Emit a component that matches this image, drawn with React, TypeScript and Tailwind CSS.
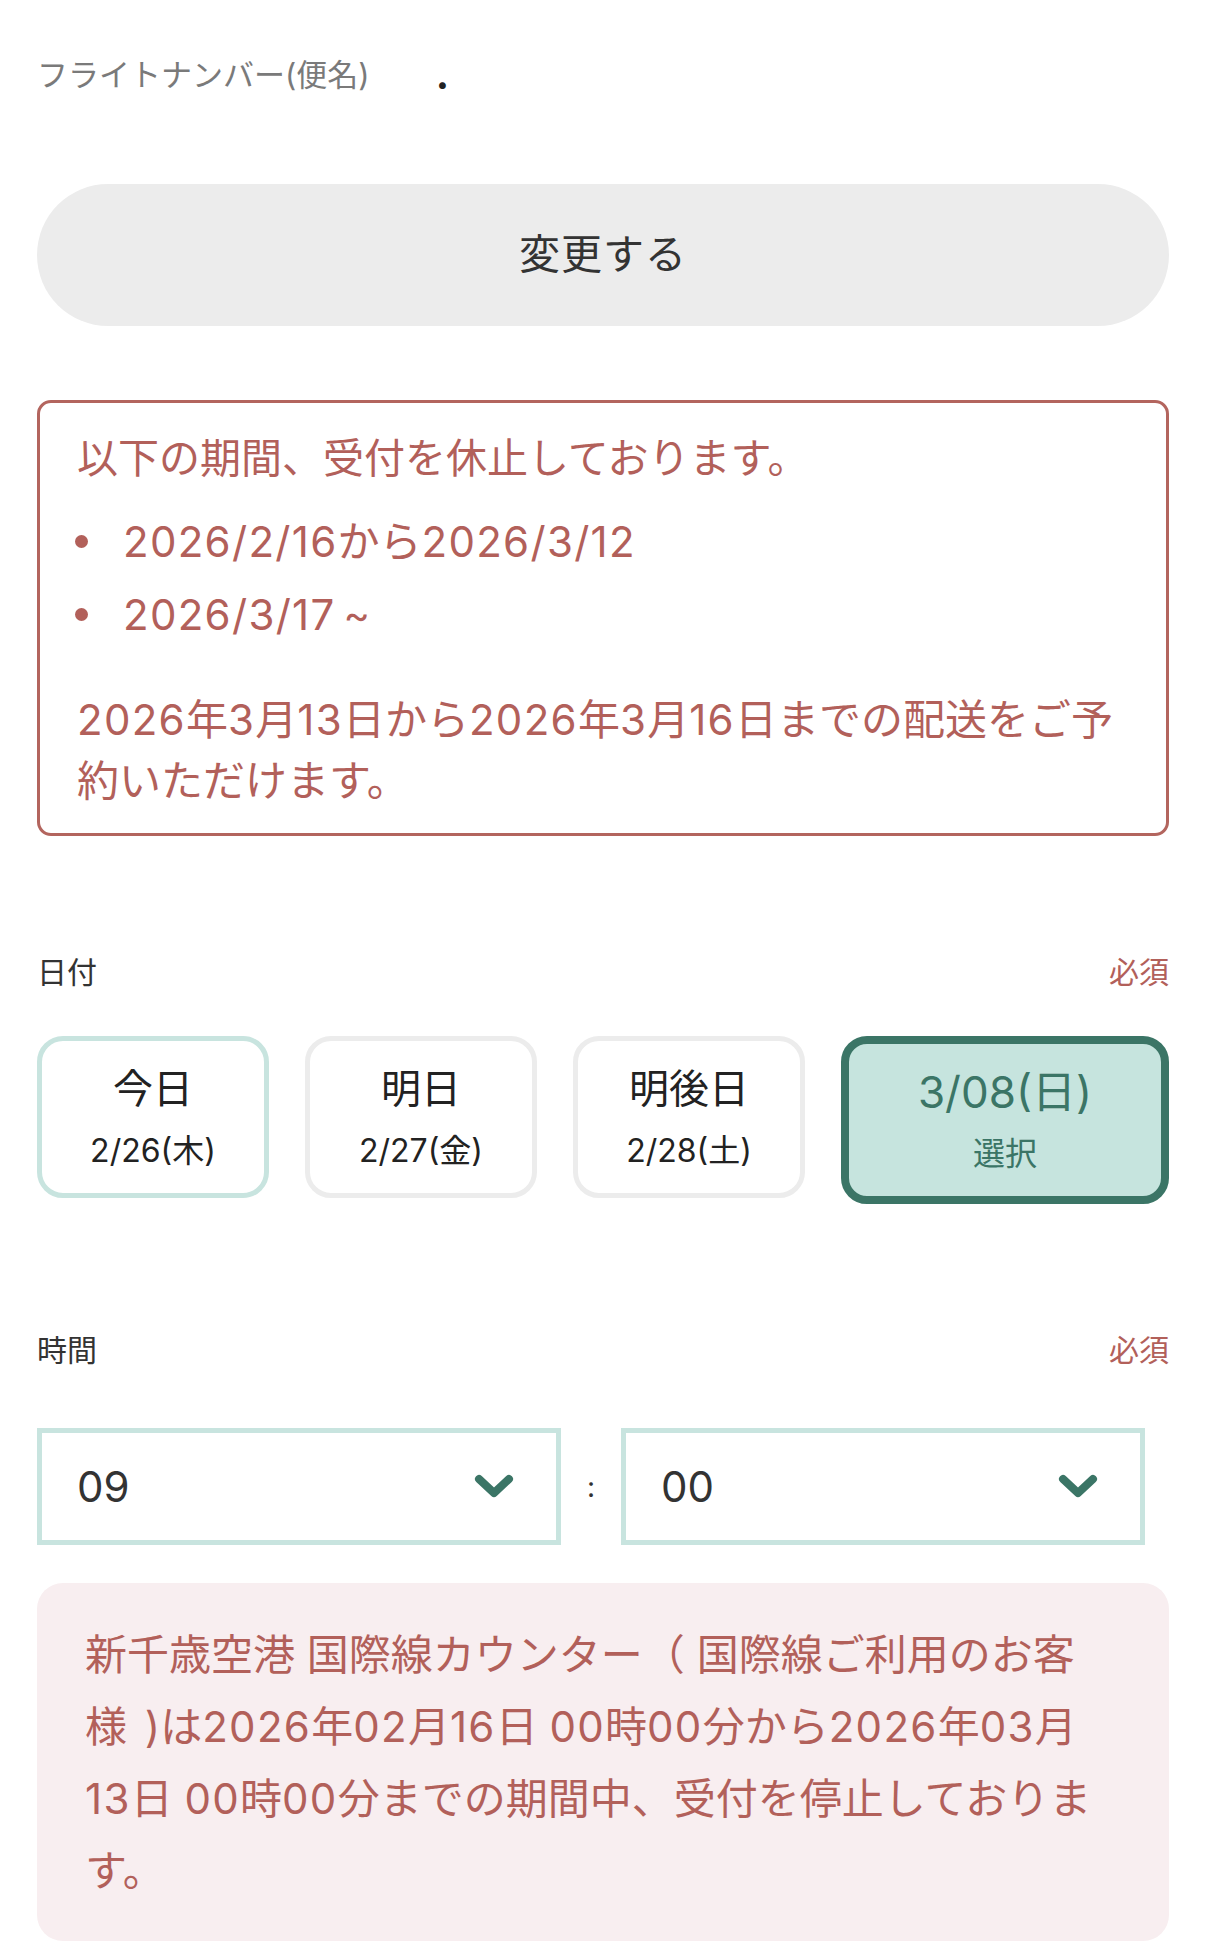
import React from 'react';

const font = { fontFamily: "Inter, 'Noto Sans CJK JP', sans-serif" };

// digits in the notices run a little wider than Inter's
const Wide: React.FC<{ text: string }> = ({ text }) => (
  <>
    {text.split(/([\d/]+)/).map((part, i) =>
      /^[\d/]+$/.test(part) ? (
        <span key={i} className="tracking-[1.3px]">
          {part}
        </span>
      ) : (
        part
      )
    )}
  </>
);

const Chevron: React.FC = () => (
  <svg width="40" height="26" viewBox="0 0 40 26" fill="none">
    <path d="M5 5 L20 19 L35 5" stroke="#3b7566" strokeWidth="8" strokeLinecap="round" strokeLinejoin="round" />
  </svg>
);

const TimeSelect: React.FC<{ value: string }> = ({ value }) => (
  <div className="w-[524px] h-[117px] border-[5px] border-[#c8e4df] flex items-center justify-between pl-[35px] pr-[42px]">
    <span className="text-[42px] leading-none text-[#333]">{value}</span>
    <Chevron />
  </div>
);

export default function App() {
  const days = [
    { top: '今日', sub: '2/26(木)', border: 'border-[#c8e4df]' },
    { top: '明日', sub: '2/27(金)', border: 'border-[#ececec]' },
    { top: '明後日', sub: '2/28(土)', border: 'border-[#ececec]' },
  ];

  return (
    <div className="w-[1206px] min-h-[1952px] bg-white px-[37px]" style={font}>
      {/* Flight number row */}
      <div className="pt-[55px] flex items-end h-[95px]">
        <span className="text-[31px] leading-[40px] text-[#7a7a7a]">フライトナンバー(便名)</span>
        <span className="ml-[66px] text-[40px] leading-[40px] text-[#222] font-bold">.</span>
      </div>

      {/* Change button */}
      <button className="mt-[89px] w-full h-[142px] rounded-full bg-[#ececec] text-[41px] text-[#333] tracking-[1px]">
        変更する
      </button>

      {/* Notice box */}
      <div className="mt-[74px] border-[3px] border-[#b3655e] rounded-[14px] pt-[25px] pb-[22px] pl-[37px] pr-[20px] text-[#b2605a]">
        <p className="text-[41px] leading-[60px]">以下の期間、受付を休止しております。</p>
        <ul className="mt-[17px] text-[42px] leading-[73px]">
          <li className="flex items-center">
            <span className="w-[13px] h-[13px] rounded-full bg-[#b2605a] ml-[-2px] mr-[35px]" />
            <span>
              <Wide text="2026/2/16から2026/3/12" />
            </span>
          </li>
          <li className="flex items-center">
            <span className="w-[13px] h-[13px] rounded-full bg-[#b2605a] ml-[-2px] mr-[35px]" />
            <span>
              <Wide text="2026/3/17" />
            </span>
            <span className="ml-[8px] text-[40px]">~</span>
          </li>
        </ul>
        <p className="mt-[38px] text-[42px] leading-[61px]">
          <Wide text="2026年3月13日から2026年3月16日までの配送をご予" />
          <br />
          約いただけます。
        </p>
      </div>

      {/* Date */}
      <div className="mt-[116px] flex justify-between text-[30px] leading-[40px]">
        <span className="text-[#333]">日付</span>
        <span className="text-[#b2605a]">必須</span>
      </div>
      <div className="mt-[44px] grid grid-cols-[232px_232px_232px_1fr] gap-x-[36px] items-start">
        {days.map((d) => (
          <div
            key={d.top}
            className={`h-[162px] rounded-[26px] border-[5px] ${d.border} bg-white flex flex-col items-center justify-center text-[#222]`}
          >
            <span className="text-[40px] leading-[56px]">{d.top}</span>
            <span className="mt-[12px] text-[32px] leading-[44px]">{d.sub}</span>
          </div>
        ))}
        <div className="h-[168px] rounded-[26px] border-[8px] border-[#3b7566] bg-[#c6e4de] flex flex-col items-center justify-center text-[#3b7566]">
          <span className="text-[44px] leading-[56px]">3/08(日)</span>
          <span className="mt-[12px] text-[32px] leading-[44px]">選択</span>
        </div>
      </div>

      {/* Time */}
      <div className="mt-[126px] flex justify-between text-[30px] leading-[40px]">
        <span className="text-[#333]">時間</span>
        <span className="text-[#b2605a]">必須</span>
      </div>
      <div className="mt-[58px] flex items-center">
        <TimeSelect value="09" />
        <span className="w-[60px] text-center text-[28px] text-[#333]">:</span>
        <TimeSelect value="00" />
      </div>

      {/* Counter notice */}
      <div className="mt-[38px] rounded-[26px] bg-[#f8eef0] pt-[36px] pb-[34px] px-[48px] text-[42px] leading-[72px] text-[#b2605a]">
        新千歳空港 国際線カウンター（ 国際線ご利用のお客
        <br />
        様 <span className="ml-[6px]">)</span>は<Wide text="2026年02月16日 00時00分から2026年03月" />
        <br />
        <Wide text="13日 00時00分までの期間中、受付を停止しておりま" />
        <br />
        す。
      </div>
    </div>
  );
}
